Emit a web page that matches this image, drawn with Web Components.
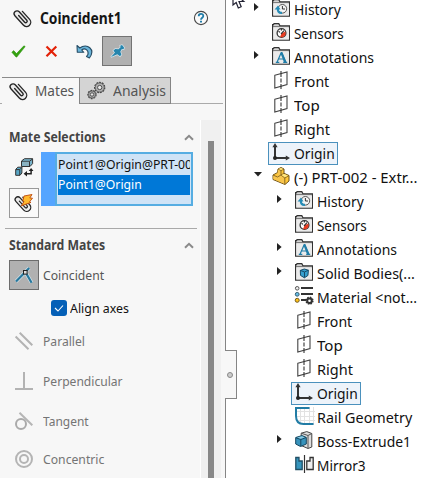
<!DOCTYPE html>
<html lang="en"><head><meta charset="utf-8"><title>Coincident mate</title>
<style>html,body{margin:0;width:439px;height:478px;overflow:hidden;background:#fff}</style></head>
<body><cad-app></cad-app>
<script>
const folder = '<path d="M.6 17.2V1.6H1.5L2 .7H6.8L8 2.8H17.4V17.2Z" fill="#d4d4d4" stroke="#333" stroke-width="1.2"/><path d="M1.3 4.5H17V16.5H1.3Z" fill="#ebebeb"/><path d="M1 3.5H17" stroke="#666" stroke-width=".8"/>';
const wire = 'M-1-4.2V4.8A1.45 1.45 0 0 0 1.9 4.8V-6.6A2.9 2.9 0 0 0-3.9-6.6V6A3.9 3.9 0 0 0 4.6 6V-4.8';
const clip = `<g transform="translate(8.2 9) rotate(-42)" fill="none" stroke-linecap="round"><path d="M-3.9-6.6A2.9 2.9 0 0 1 1.9-6.6L4.6-4V6A4 4 0 0 1-3.9 6Z" fill="#ececec"/><path d="${wire}" stroke="#262626" stroke-width="1.35"/></g>`;
const gear = (x,y,r)=>`<circle cx="${x}" cy="${y}" r="${r}" fill="#9b9b9b" stroke="#444" stroke-width="1.4" stroke-dasharray="1.8 1"/><circle cx="${x}" cy="${y}" r="${r-.5}" fill="#b0b0b0" stroke="#555" stroke-width=".7"/><circle cx="${x}" cy="${y}" r="${r*.43}" fill="#e8e8e8" stroke="#444" stroke-width=".9"/>`;
const icons = {
 clip:[17,18,clip],
 help:[16,16,'<circle cx="8" cy="8" r="6.6" fill="#fafafa" stroke="#484848" stroke-width="1.1"/><path d="M5.7 6.2C5.7 3 10.4 3.1 10.3 6C10.3 7.7 8 7.8 8 9.7" fill="none" stroke="#207da9" stroke-width="1.8"/><path d="M7 10.8H9V12.5H7Z" fill="#207da9"/>'],
 check:[15,13,'<path d="M.8 7.2L2.7 5.6L5.5 8.6L12.9.8L14.2 1.6L5.8 12.1H5Z" fill="#35a20f" stroke="#278c0b" stroke-width=".5"/>'],
 cross:[13,13,'<path d="M1.5 1.5L11.3 11.3M11.3 1.5L1.5 11.3" stroke="#e32208" stroke-width="2.2"/>'],
 undo:[17,15,'<path d="M1 1.5L1.3 8.3H7.8L5.7 6C9 3.4 12.8 6.2 12 10.4L10.5 12.5L13.4 14C20 5.4 11-1.4 3.8 4Z" fill="#6ab5da" stroke="#264c65" stroke-width="1.1" stroke-linejoin="round"/>'],
 pin:[15,15,'<path d="M1 13L5 8.6L3.4 6.7L5.2 5L8.5 5.2L10.6 3.2L10.2 1.7L12 1L14 3.5L13.7 5.1L11.6 5.2L10.3 7.7L11.4 10.6L10 12.3L7.3 10.3Z" fill="#d5e6ee" stroke="#d5e6ee" stroke-width="1.4"/><path d="M1 13L5 8.6L3.4 6.7L5.2 5L8.5 5.2L10.6 3.2L10.2 1.7L12 1L14 3.5L13.7 5.1L11.6 5.2L10.3 7.7L11.4 10.6L10 12.3L7.3 10.3Z" fill="#2685ad"/>'],
 gears:[20,19,gear(12.7,6.5,5)+gear(5,13.5,4)],
 chevron:[10,7,'<path d="M1 5.8L5 1.8L9 5.8" fill="none" stroke="#8a8a8a" stroke-width="2"/>'],
 parts:[19,19,'<path d="M6.5 3L9.5.7H17.6V5.6L15 8.5H6.5Z" fill="#78b3cb" stroke="#333"/><path d="M7 3.3H14.5L17.5 1M14.5 3.5V8.5" fill="none" stroke="#333"/><path d="M7.5 3.8H14V7.8H7.5Z" fill="#8bb2c0"/><path d="M.7 11.3L2.8 9.2H6.9V15L5 17.3H.7Z" fill="#59a8c8" stroke="#333"/><path d="M1 11.6H4.8L6.8 9.5M4.8 12V17.2" stroke="#333" fill="none"/><path d="M16.1 12V15.8H11.5" fill="none" stroke="#222" stroke-width="1.5"/><path d="M12 13V18.5L8.6 15.8ZM13.7 13H18.5L16.1 10Z" fill="#222"/>'],
 boltclip:[18,18,'<g transform="translate(0 1) scale(.94)">'+clip+'</g><path d="M9 2L17 .5L14.8 4L17.5 4.2L14.5 7.8L16 8.4L6.3 11.8L9 7.5L7.8 6.7Z" fill="#ffb92e" stroke="#bd480b" stroke-width=".9"/>'],
 coincident:[18,18,'<path d="M1 15.5L14.2 2M10.4 6L16.6 16.7" stroke="#cfe1e9" stroke-width="3.6"/><path d="M1 15.5L14.2 2M10.4 6L16.6 16.7" stroke="#28789d" stroke-width="2.2"/><rect x="8.5" y="4.5" width="3.6" height="3.6" fill="#ddd" stroke="#222"/>'],
 parallel:[18,18,'<path d="M.6 4.5L13.5 17.3M4.7.7L17.3 13.3" stroke="#b3b3b3" stroke-width="2"/>'],
 perp:[18,18,'<path d="M9 0V17M0 17H18" stroke="#b3b3b3" stroke-width="2"/>'],
 tangent:[18,18,'<circle cx="6" cy="12" r="5" fill="none" stroke="#aaa" stroke-width="2"/><path d="M4.5.7L17.3 13.3" stroke="#b5b5b5" stroke-width="2"/>'],
 concentric:[18,18,'<g fill="none" stroke="#b4b4b4" stroke-width="2"><circle cx="9" cy="9" r="8"/><circle cx="9" cy="9" r="4"/></g>'],
 history:[18,18,folder+'<circle cx="10.4" cy="9.8" r="4.3" fill="#f4f4f4" stroke="#555"/><path d="M10.4 7V10H13" fill="none" stroke="#333"/><path d="M10 13.8C6.5 14.2 5.8 12 5.8 9.6" fill="none" stroke="#268cb6" stroke-width="2.2"/><path d="M2.6 10.4L6 6.6L8.5 10.4Z" fill="#268cb6"/>'],
 sensors:[18,18,folder+'<circle cx="9.5" cy="10" r="4.4" fill="#fff" stroke="#333" stroke-width="1.3"/><path d="M9.5 10.2L13.5 8.5V12L11 14.2H8Z" fill="#e93c20"/><path d="M9 11L12 7.6M6.5 8.2L8 9.4M9.4 6V7.5" stroke="#333" stroke-width="1.2"/>'],
 annotations:[18,18,folder+'<path d="M5 15.2L9.2 5.7H9.9L14 15.2M6.6 12H11.8M3.8 15.4H7.3M11.2 15.4H15.2" fill="none" stroke="#207da8" stroke-width="1.2"/><path d="M9.4 6L13 15.2" stroke="#207da8" stroke-width="2"/>'],
 solids:[18,18,folder+'<path d="M5.3 7.4L9.3 6L13.4 7.2L12.9 12.5L9.4 14.8L5.5 12.4Z" fill="#36a0cf" stroke="#174b68"/><path d="M5.3 7.4L9.5 9L13.4 7.2M9.5 9V14.5" fill="none" stroke="#174b68"/>'],
 plane:[18,18,'<path d="M2.8 4.3L15 1V13.5L2.8 17Z" fill="none" stroke="#444" stroke-width="1.1"/><path d="M9 0V6M9 7.5V11.5M9 13V18" stroke="#333" stroke-width="1.1"/>'],
 origin:[18,18,'<path d="M3 3V15H15" fill="none" stroke="#333" stroke-width="2"/><path d="M3 0L5.6 4.3H.4ZM18 15L13.8 12.5V17.5Z" fill="#333"/><circle cx="3" cy="15" r="2" fill="#222"/>'],
 part:[18,18,'<path d="M1 8L5.5 5.5L6 2L9 .5L12 2V6.3L17 8.5V14L13 17.5L1 12.5Z" fill="#ffc637" stroke="#71551c"/><path d="M6 2L9 3.5V8L12.8 11V17L1.3 12V8.3L5.5 9.5Z" fill="#f8c54d"/><path d="M6 2L9 3.5L12 2M9 3.5V8L12 6.3M1 8L5.5 10L9 8L12.8 11L17 8.5M12.8 11V17" fill="none" stroke="#71551c" stroke-width=".8"/><path d="M6.5 2L9 1L11.3 2L9 3ZM9.5 8L12 7L16 8.5L13 10.3Z" fill="#ffe682"/>'],
 material:[20,19,'<path d="M6 2H18M6 8H18M6 14H11" stroke="#333" stroke-width="2"/><circle cx="2.2" cy="2.3" r="1.8" fill="#eee" stroke="#555"/><circle cx="2.2" cy="8.3" r="1.9" fill="#67bce4" stroke="#365f72"/><circle cx="2.2" cy="14.3" r="2" fill="#ffc119" stroke="#715b21"/><circle cx="14.5" cy="14.7" r="2.3" fill="none" stroke="#333" stroke-width="2"/><circle cx="14.5" cy="14.7" r="3.3" fill="none" stroke="#333" stroke-width="1.6" stroke-dasharray="1.5 1.09"/>'],
 rail:[20,18,'<path d="M5.5 1V17M9.5 0V18M14.5 0V18M18.5 0V18M1 4.5H20M1 9.5H20M1 13.5H20" stroke="#e2e2e2"/><path d="M14.5 1H1V9Q1 17 8.5 17H18.5" fill="none" stroke="#217ca5" stroke-width="2"/>'],
 boss:[18,18,'<path d="M6.2 2.2L11.8.6L16.8 2.5V16L13 17.5L6.2 14.5Z" fill="#ddd" stroke="#444"/><path d="M6.2 2.2L13 4.5L16.8 2.5M13 4.5V17" fill="none" stroke="#555"/><path d="M.7 6.5L7 4.6L11.3 6.4V13L5.5 15.5L.7 13Z" fill="#3793bc" stroke="#174760"/><path d="M1 6.8L5.8 8.5L11 6.5M5.8 8.5V15.2" fill="none" stroke="#174760"/><path d="M2 6.5L7 5.2L9.8 6.4L5.7 7.8Z" fill="#8bcce5"/>'],
 mirror:[19,18,'<path d="M.8 2.5H4V6H7.2V14.5H.8Z" fill="#3695bd" stroke="#224f65" stroke-width="1.3"/><path d="M18.2 2.5H15V6H11.8V14.5H18.2Z" fill="#eee" stroke="#333" stroke-width="1.3"/><path d="M9.5 0V18" stroke="#333" stroke-width="1.2"/>'],
 right:[5,8,'<path d="M0 0L4.6 4L0 8Z" fill="#222"/>'],
 down:[8,5,'<path d="M0 0H8L4 4.6Z" fill="#222"/>'],
 pointer:[16,17,'<path d="M2-7V6L5.2 3.5L7.3 9L10.2 7.7L8 2.5H12.8Z" fill="#fff" stroke="#223" stroke-width="1.2"/>']
};
customElements.define('ui-icon', class extends HTMLElement{
 connectedCallback(){ if(this.shadowRoot) return; const [w,h,art]=icons[this.getAttribute('name')];
 this.attachShadow({mode:'open'}).innerHTML=`<style>:host{display:block;flex:none;width:${w}px;height:${h}px}svg{display:block;overflow:visible}</style><svg width="${w}" height="${h}" viewBox="0 0 ${w} ${h}">${art}</svg>`; }
});
/* A single-line label condensed or widened to its column width. */
customElements.define('fit-text', class extends HTMLElement{
 connectedCallback(){ if(this.shadowRoot) return; const w=+this.getAttribute('w');
 this.attachShadow({mode:'open'}).innerHTML=`<style>:host{display:block;flex:none;width:${w}px;white-space:pre}span{display:inline-block;transform-origin:0 50%}</style><span><slot></slot></span>`;
 const s=this.shadowRoot.querySelector('span'); s.style.transform=`scaleX(${w/s.offsetWidth})`; }
});
customElements.define('tree-row', class extends HTMLElement{
 connectedCallback(){ const a=n=>this.getAttribute(n), open=a('open');
 this.attachShadow({mode:'open'}).innerHTML=`<style>:host{display:flex;height:24px;align-items:center;box-sizing:border-box;padding-left:${a('level')==='1'?51:28}px;font:14.5px/22px "Noto Sans",sans-serif;color:#111}
 .arrow{width:14px;padding-bottom:5px}.item{display:flex;align-items:center;gap:4px;height:21px;width:max-content;border:1px solid transparent;padding:0 2px 0 3px}.item.on{background:#edf3fa;border-color:#4b91bd}.pic{width:18px;padding-bottom:3px}fit-text{padding-bottom:1px}</style>
 <div class="arrow">${open?`<ui-icon name="${open}"></ui-icon>`:''}</div><div class="item ${this.hasAttribute('selected')?'on':''}"><div class="pic"><ui-icon name="${a('icon')}"></ui-icon></div><fit-text w="${a('w')}">${this.innerHTML}</fit-text></div>`; }
});
customElements.define('mate-row', class extends HTMLElement{
 connectedCallback(){ const a=n=>this.getAttribute(n);
 this.attachShadow({mode:'open'}).innerHTML=`<style>:host{display:flex;height:${a('h')}px;align-items:center;gap:4px;padding-left:9px;font:13px/18px "Noto Sans",sans-serif;color:${a('on')!==null?'#555':'#747474'}}
 div{width:30px;height:30px;box-sizing:border-box;border:1px solid transparent;display:grid;place-items:center}.on{background:#b1b1b1;border:1px solid #6d6d6d}</style><div class="${a('on')!==null?'on':''}"><ui-icon name="${a('icon')}"></ui-icon></div><fit-text w="${a('w')}">${this.innerHTML}</fit-text>`; }
});
customElements.define('section-title', class extends HTMLElement{
 connectedCallback(){ this.attachShadow({mode:'open'}).innerHTML=`<style>:host{display:flex;justify-content:space-between;align-items:center;height:20px;padding:0 6px 0 9px;font:bold 13.5px/20px "Noto Sans",sans-serif;color:#444}</style><fit-text w="${this.getAttribute('w')}">${this.innerHTML}</fit-text><ui-icon name="chevron"></ui-icon>`; }
});
customElements.define('mate-panel', class extends HTMLElement{
 connectedCallback(){ this.attachShadow({mode:'open'}).innerHTML=`<style>
 :host{display:flex;flex-direction:column;width:225px;height:478px;flex:none;background:#f7f7f7;border-right:1px solid #858585;font-family:"Noto Sans",sans-serif;overflow:hidden}
 header,.tools,.tabs{flex:none}
 header{display:flex;align-items:center;height:36px;padding-left:14px;box-sizing:border-box;gap:9px;font:bold 16.5px/24px "Noto Sans",sans-serif;color:#151515}header ui-icon:last-child{margin-left:62px}
 .tools{display:flex;height:30px;align-items:center;padding-left:11px}.tools ui-icon:nth-child(2){margin-left:19px}.tools ui-icon:nth-child(3){margin-left:18px}.pin{width:30px;height:30px;box-sizing:border-box;display:grid;place-items:center;background:#b0b0b0;border:1px solid #737373;margin-left:9px}
 .tabs{display:flex;height:27px;margin-top:11px;font:15px/25px "Noto Sans",sans-serif;color:#555}.tabs>*{box-sizing:border-box;border-bottom:1px solid #aaa}.start{width:2px}.mates{width:77px;border-top:1px solid #8b8b8b;border-bottom:0;display:flex;align-items:center;padding-left:8px;gap:8px}.mates fit-text{padding-bottom:1px}.analysis{width:92px;border:1px solid #858585;background:#d4d4d4;display:flex;align-items:center;padding-left:7px;gap:6px}.end{width:52px}
 .content{display:flex;flex:1;padding-top:16px}.main{width:200px;flex:none;padding-top:7px}.scroll{background:#f0f0f0;border-left:1px solid #fff;padding:21px 0 0 7px;width:13px}.thumb{width:6px;height:337px;background:#888}
 .select{display:flex;height:66px;margin-top:5px;padding-left:9px;gap:2px}.btns{display:flex;flex-direction:column;width:30px;gap:6px}.btns div{height:30px;box-sizing:border-box;display:grid;place-items:center}.btns div+div{border:1px solid #999;background:#fafafa}
 .list{display:flex;width:152px;height:54px;background:#55a5ff}.box{margin-left:14px;width:138px;height:54px;border:2px solid #56ade2;box-sizing:border-box;background:#cfe3f6;padding:1px 1px 0;font:12.5px/20px "Noto Sans",sans-serif;color:#111}.box div{height:20px;overflow:hidden}.box div+div{background:#0078d7;color:white}
 .line{height:1px;margin:10px 3px 6px 5px;background:#a9a9a9}.align{display:flex;height:25px;margin-bottom:4px;padding-left:51px;align-items:center;gap:3px;font:13px/18px "Noto Sans",sans-serif;color:#111}.box2{width:16px;height:16px;border-radius:3px;background:#0560b7}
 </style>
 <header><ui-icon name="clip"></ui-icon><fit-text w="82">Coincident1</fit-text><ui-icon name="help"></ui-icon></header>
 <div class="tools"><ui-icon name="check"></ui-icon><ui-icon name="cross"></ui-icon><ui-icon name="undo"></ui-icon><div class="pin"><ui-icon name="pin"></ui-icon></div></div>
 <div class="tabs"><div class="start"></div><div class="mates"><ui-icon name="clip"></ui-icon><fit-text w="39">Mates</fit-text></div><div class="analysis"><ui-icon name="gears"></ui-icon><fit-text w="53">Analysis</fit-text></div><div class="end"></div></div>
 <div class="content"><div class="main"><section-title w="97">Mate Selections</section-title>
 <div class="select"><div class="btns"><div><ui-icon name="parts"></ui-icon></div><div><ui-icon name="boltclip"></ui-icon></div></div><div class="list"><div class="box"><div><fit-text w="134">Point1@Origin@PRT-00</fit-text></div><div><fit-text w="84">Point1@Origin</fit-text></div></div></div></div>
 <div class="line"></div><section-title w="96">Standard Mates</section-title>
 <mate-row on icon="coincident" h="40" w="61">Coincident</mate-row>
 <div class="align"><div class="box2"><svg width="16" height="16"><path d="M4 8L7 11L12 5.5" fill="none" stroke="white" stroke-width="1.1"/></svg></div><fit-text w="59">Align axes</fit-text></div>
 <mate-row icon="parallel" h="33" w="42">Parallel</mate-row><mate-row icon="perp" h="47" w="80">Perpendicular</mate-row><mate-row icon="tangent" h="33" w="46">Tangent</mate-row><mate-row icon="concentric" h="43" w="61">Concentric</mate-row>
 </div><div class="scroll"><div class="thumb"></div></div></div>`; }
});
customElements.define('feature-tree', class extends HTMLElement{
 connectedCallback(){ this.attachShadow({mode:'open'}).innerHTML=`<style>:host{display:block;flex:1;margin-top:-3px;overflow:hidden;background:#fff}</style>
 <tree-row open="right" icon="history" w="47">History</tree-row><tree-row icon="sensors" w="50">Sensors</tree-row><tree-row open="right" icon="annotations" w="80">Annotations</tree-row><tree-row icon="plane" w="35">Front</tree-row><tree-row icon="plane" w="26">Top</tree-row><tree-row icon="plane" w="36">Right</tree-row><tree-row selected icon="origin" w="41">Origin</tree-row><tree-row open="down" icon="part" w="123">(-) PRT-002 - Extr...</tree-row>
 <tree-row level="1" open="right" icon="history" w="47">History</tree-row><tree-row level="1" icon="sensors" w="50">Sensors</tree-row><tree-row level="1" open="right" icon="annotations" w="80">Annotations</tree-row><tree-row level="1" open="right" icon="solids" w="98">Solid Bodies(...</tree-row><tree-row level="1" icon="material" w="100">Material &lt;not...</tree-row><tree-row level="1" icon="plane" w="35">Front</tree-row><tree-row level="1" icon="plane" w="26">Top</tree-row><tree-row level="1" icon="plane" w="36">Right</tree-row><tree-row level="1" selected icon="origin" w="41">Origin</tree-row><tree-row level="1" icon="rail" w="95">Rail Geometry</tree-row><tree-row level="1" open="right" icon="boss" w="94">Boss-Extrude1</tree-row><tree-row level="1" icon="mirror" w="49">Mirror3</tree-row>`; }
});
customElements.define('cad-app', class extends HTMLElement{
 connectedCallback(){ this.attachShadow({mode:'open'}).innerHTML=`<style>:host{display:flex;position:relative;width:439px;height:478px;overflow:hidden}.handle{position:absolute;left:225px;top:350px;width:12px;height:49px;box-sizing:border-box;background:#f7f7f7;border:1px solid #858585;border-left:0}.handle:after{content:"";position:absolute;left:2px;top:21px;width:4px;height:4px;border:1px solid #888;border-radius:50%;background:#ccc}.pointer{position:absolute;left:231px;top:-1px}</style><mate-panel></mate-panel><feature-tree></feature-tree><div class="handle"></div><ui-icon class="pointer" name="pointer"></ui-icon>`; }
});
</script></body></html>
